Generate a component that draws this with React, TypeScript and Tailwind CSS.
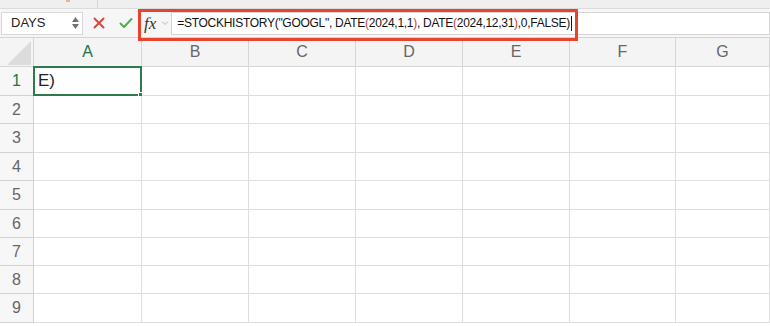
import React from "react";

const cols = ["A", "B", "C", "D", "E", "F", "G"];
const rowHeights = [29, 28, 29, 28, 29, 28, 28, 28, 29];

function Triangles() {
    return (
        <div className="flex flex-col items-center justify-center gap-[2px] w-[8px]">
            <svg width="7" height="5" viewBox="0 0 7 5"><path d="M3.5 0L7 5H0z" fill="#707070" /></svg>
            <svg width="7" height="5" viewBox="0 0 7 5"><path d="M0 0H7L3.5 5z" fill="#707070" /></svg>
        </div>
    );
}

export default function App() {
    return (
        <div className="relative w-[770px] h-[326px] overflow-hidden bg-white font-['Liberation_Sans',Arial,sans-serif]">
            {/* Top ribbon strip */}
            <div className="flex h-[9px] bg-[#efefef] border-b border-[#dadada]">
                <div className="w-[66px]" />
                <div className="w-[4px] h-[2px] bg-[#f4b183]" />
                <div className="w-[28px] border-r border-[#d6d6d6]" />
                <div className="flex-1" />
            </div>

            {/* Formula toolbar */}
            <div className="flex items-center h-[29px] bg-[#f6f6f6] border-b border-[#d4d4d4]">
                <div className="flex items-center justify-between ml-[1px] w-[82px] h-[23px] bg-white border border-[#d8d8d8] pl-[9px] pr-[3px]">
                    <span className="text-[13px] text-[#222]">DAYS</span>
                    <Triangles />
                </div>
                <div className="flex items-center justify-center w-[32px]">
                    <svg width="12" height="12" viewBox="0 0 12 12">
                        <path d="M1.5 1.5L10.5 10.5M10.5 1.5L1.5 10.5" stroke="#d9473f" strokeWidth="2" strokeLinecap="round" />
                    </svg>
                </div>
                <div className="flex items-center justify-center w-[22px]">
                    <svg width="14" height="12" viewBox="0 0 14 12">
                        <path d="M1.5 6.5L5 10L12.5 2" stroke="#4caf50" strokeWidth="2" fill="none" strokeLinecap="round" strokeLinejoin="round" />
                    </svg>
                </div>
                <div className="flex items-center ml-[6px] flex-1 h-full">
                    <span className="ml-[1px] font-['Liberation_Serif',serif] italic text-[17px] text-[#333] leading-none">fx</span>
                    <svg className="ml-[5px]" width="8" height="6" viewBox="0 0 8 6">
                        <path d="M1 1.5L4 4.5L7 1.5" stroke="#b8b8b8" strokeWidth="1" fill="none" />
                    </svg>
                    <div className="ml-[2px] flex-1 flex items-center h-[23px] bg-white border border-[#d4d4d4] pl-[5px]">
                        <span className="text-[12px] text-[#111] whitespace-nowrap tracking-[-0.28px]">
                            =STOCKHISTORY("GOOGL", DATE<span className="text-[#d23a30]">(</span>2024,1,1<span className="text-[#d23a30]">)</span>, DATE<span className="text-[#d23a30]">(</span>2024,12,31<span className="text-[#d23a30]">)</span>,0,FALSE)
                        </span>
                        <span className="ml-[1px] w-[1px] h-[15px] bg-[#111]" />
                    </div>
                </div>
            </div>

            {/* Annotation around formula */}
            <div className="absolute left-[138px] top-[9px] w-[440px] h-[32px] border-[3px] border-[#e8432d] pointer-events-none" />

            {/* Sheet grid */}
            <div className="grid grid-cols-[34px_108px_107px_107px_107px_107px_106px_1fr]">
                <div className="h-[29px] bg-[#f4f4f4] border-r border-b border-[#d6d6d6] flex items-end justify-end pr-[2px] pb-[1px]">
                    <svg width="24" height="24" viewBox="0 0 24 24"><path d="M24 0V24H0z" fill="#dcdcdc" /></svg>
                </div>
                {cols.map((c) => (
                    <div
                        key={c}
                        className={`h-[29px] flex items-center justify-center bg-[#f4f4f4] border-r border-b border-[#d6d6d6] text-[16px] ${c === "A" ? "text-[#217346]" : "text-[#666]"}`}
                    >
                        {c}
                    </div>
                ))}
                {rowHeights.map((h, i) => (
                    <React.Fragment key={i}>
                        <div
                            style={{ height: h }}
                            className={`flex items-center justify-center bg-[#f7f7f7] border-r border-b border-[#d2d2d2] text-[16px] ${i === 0 ? "text-[#217346]" : "text-[#666]"}`}
                        >
                            {i + 1}
                        </div>
                        {cols.map((c) => (
                            <div key={c} style={{ height: h }} className="relative border-r border-b border-[#dedede]">
                                {i === 0 && c === "A" && (
                                    <div className="absolute left-[-1px] top-[-1px] right-[-1px] bottom-[-1px] border-2 border-[#2f7a4d] flex items-center pl-[3px]">
                                        <span className="text-[17px] text-[#222]">E)</span>
                                        <div className="absolute right-[-3px] bottom-[-3px] w-[5px] h-[5px] bg-[#2f7a4d] border border-white" />
                                    </div>
                                )}
                            </div>
                        ))}
                    </React.Fragment>
                ))}
            </div>
        </div>
    );
}
